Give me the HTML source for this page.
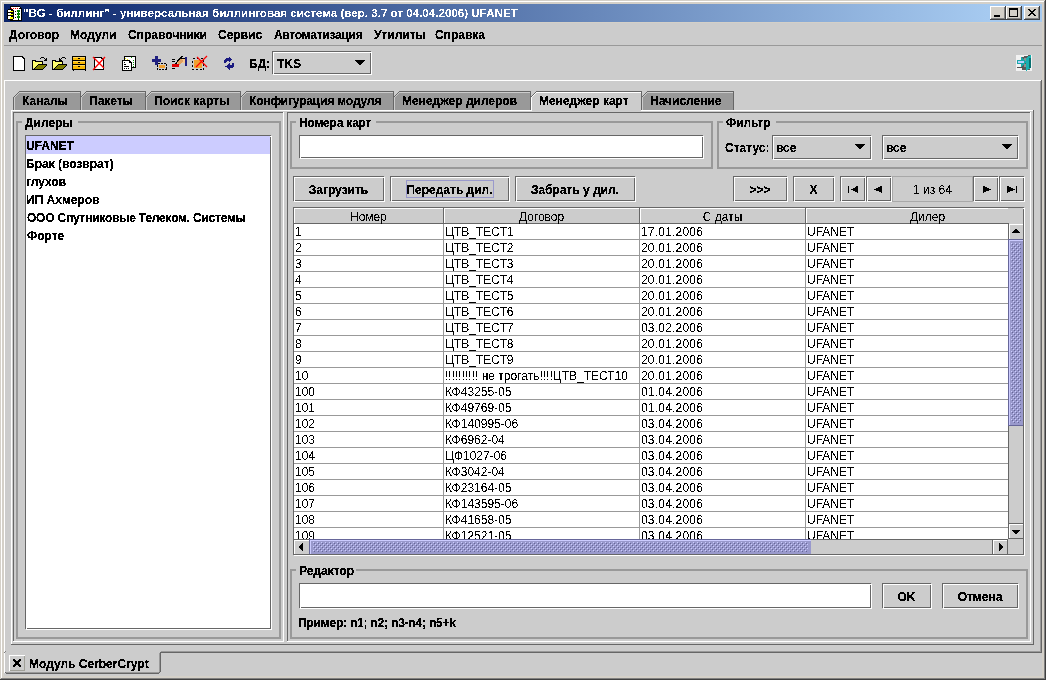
<!DOCTYPE html>
<html><head><meta charset="utf-8"><style>
html,body{margin:0;padding:0;width:1046px;height:680px;overflow:hidden;background:#d4d0c8}
svg{position:absolute;left:0;top:0}
.t{position:absolute;font-family:"Liberation Sans",sans-serif;white-space:pre;line-height:12px;color:#000}
</style></head><body>
<svg width="1046" height="680" viewBox="0 0 1046 680" shape-rendering="crispEdges">
<rect x="0" y="0" width="1046" height="680" fill="#d4d0c8"/><rect x="1" y="1" width="1044" height="1" fill="#ffffff"/><rect x="1" y="1" width="1" height="678" fill="#ffffff"/><rect x="1044" y="1" width="1" height="678" fill="#808080"/><rect x="1" y="678" width="1044" height="1" fill="#808080"/><rect x="1045" y="0" width="1" height="680" fill="#404040"/><rect x="0" y="679" width="1046" height="1" fill="#404040"/><rect x="4" y="23" width="1038" height="653" fill="#cccccc"/><defs><linearGradient id="tg" gradientUnits="userSpaceOnUse" x1="4" x2="988" y1="0" y2="0"><stop offset="0" stop-color="#0a246a"/><stop offset="1" stop-color="#a6caf0"/></linearGradient><pattern id="bumpV" x="1011" y="243" width="4" height="4" patternUnits="userSpaceOnUse"><rect width="4" height="4" fill="#9999cc"/><rect x="0" y="0" width="1" height="1" fill="#ccccff"/><rect x="1" y="1" width="1" height="1" fill="#666699"/><rect x="2" y="2" width="1" height="1" fill="#ccccff"/><rect x="3" y="3" width="1" height="1" fill="#666699"/></pattern><pattern id="bumpH" x="313" y="542" width="4" height="4" patternUnits="userSpaceOnUse"><rect width="4" height="4" fill="#9999cc"/><rect x="0" y="0" width="1" height="1" fill="#ccccff"/><rect x="1" y="1" width="1" height="1" fill="#666699"/><rect x="2" y="2" width="1" height="1" fill="#ccccff"/><rect x="3" y="3" width="1" height="1" fill="#666699"/></pattern></defs><rect x="4" y="4" width="1038" height="18" fill="url(#tg)"/><rect x="990" y="6" width="16" height="14" fill="#d4d0c8"/><rect x="990" y="6" width="16" height="1" fill="#ffffff"/><rect x="990" y="6" width="1" height="14" fill="#ffffff"/><rect x="990" y="19" width="16" height="1" fill="#404040"/><rect x="1005" y="6" width="1" height="14" fill="#404040"/><rect x="991" y="18" width="14" height="1" fill="#808080"/><rect x="1004" y="7" width="1" height="12" fill="#808080"/><rect x="994" y="15" width="6" height="2" fill="#000"/><rect x="1006" y="6" width="16" height="14" fill="#d4d0c8"/><rect x="1006" y="6" width="16" height="1" fill="#ffffff"/><rect x="1006" y="6" width="1" height="14" fill="#ffffff"/><rect x="1006" y="19" width="16" height="1" fill="#404040"/><rect x="1021" y="6" width="1" height="14" fill="#404040"/><rect x="1007" y="18" width="14" height="1" fill="#808080"/><rect x="1020" y="7" width="1" height="12" fill="#808080"/><rect x="1009" y="8" width="9" height="1" fill="#000"/><rect x="1009" y="16" width="9" height="1" fill="#000"/><rect x="1009" y="8" width="1" height="9" fill="#000"/><rect x="1017" y="8" width="1" height="9" fill="#000"/><rect x="1009" y="9" width="9" height="1" fill="#000"/><rect x="1024" y="6" width="16" height="14" fill="#d4d0c8"/><rect x="1024" y="6" width="16" height="1" fill="#ffffff"/><rect x="1024" y="6" width="1" height="14" fill="#ffffff"/><rect x="1024" y="19" width="16" height="1" fill="#404040"/><rect x="1039" y="6" width="1" height="14" fill="#404040"/><rect x="1025" y="18" width="14" height="1" fill="#808080"/><rect x="1038" y="7" width="1" height="12" fill="#808080"/><rect x="1028" y="9" width="2" height="1" fill="#000"/><rect x="1034" y="9" width="2" height="1" fill="#000"/><rect x="1029" y="10" width="2" height="1" fill="#000"/><rect x="1033" y="10" width="2" height="1" fill="#000"/><rect x="1030" y="11" width="2" height="1" fill="#000"/><rect x="1032" y="11" width="2" height="1" fill="#000"/><rect x="1031" y="12" width="2" height="1" fill="#000"/><rect x="1031" y="12" width="2" height="1" fill="#000"/><rect x="1032" y="13" width="2" height="1" fill="#000"/><rect x="1030" y="13" width="2" height="1" fill="#000"/><rect x="1033" y="14" width="2" height="1" fill="#000"/><rect x="1029" y="14" width="2" height="1" fill="#000"/><rect x="1034" y="15" width="2" height="1" fill="#000"/><rect x="1028" y="15" width="2" height="1" fill="#000"/><path d="M10 6 H19 L22 9 V21 H10 Z" fill="#000"/><rect x="11" y="7" width="8" height="13" fill="#fff"/><rect x="19" y="9" width="2" height="11" fill="#fff"/><rect x="19" y="7" width="1" height="1" fill="#fff"/><rect x="11" y="8" width="1" height="1" fill="#ff0000"/><rect x="13" y="8" width="1" height="1" fill="#ff0000"/><rect x="15" y="8" width="1" height="1" fill="#ff0000"/><rect x="17" y="8" width="1" height="1" fill="#ff0000"/><rect x="15" y="11" width="1" height="1" fill="#000"/><rect x="15" y="14" width="1" height="1" fill="#000"/><rect x="15" y="17" width="1" height="1" fill="#000"/><rect x="18" y="10" width="1" height="11" fill="#000"/><rect x="17" y="10" width="3" height="2" fill="#008000"/><rect x="18" y="12" width="1" height="1" fill="#008000"/><rect x="17" y="13" width="3" height="2" fill="#008000"/><rect x="18" y="15" width="1" height="1" fill="#008000"/><rect x="17" y="16" width="3" height="2" fill="#008000"/><rect x="18" y="18" width="1" height="1" fill="#008000"/><path d="M7 10 L8 9 H12 L14 10 V12 L12 14 H8 L7 12 Z" fill="#000"/><rect x="8" y="10" width="3" height="2" fill="#fff"/><rect x="10" y="11" width="3" height="2" fill="#ffff00"/><rect x="8" y="12" width="2" height="1" fill="#fff"/><path d="M7 13 L8 12 H12 L14 13 V15 L12 17 H8 L7 15 Z" fill="#000"/><rect x="8" y="13" width="3" height="2" fill="#fff"/><rect x="10" y="14" width="3" height="2" fill="#ffff00"/><rect x="8" y="15" width="2" height="1" fill="#fff"/><path d="M7 16 L8 15 H12 L14 16 V18 L12 20 H8 L7 18 Z" fill="#000"/><rect x="8" y="16" width="3" height="2" fill="#fff"/><rect x="10" y="17" width="3" height="2" fill="#ffff00"/><rect x="8" y="18" width="2" height="1" fill="#fff"/><rect x="4" y="45" width="1038" height="1" fill="#999999"/><rect x="272" y="51" width="99" height="1" fill="#666666"/><rect x="272" y="73" width="99" height="1" fill="#666666"/><rect x="272" y="51" width="1" height="23" fill="#666666"/><rect x="370" y="51" width="1" height="23" fill="#666666"/><rect x="273" y="52" width="99" height="1" fill="#ffffff"/><rect x="273" y="74" width="99" height="1" fill="#ffffff"/><rect x="273" y="52" width="1" height="23" fill="#ffffff"/><rect x="371" y="52" width="1" height="23" fill="#ffffff"/><rect x="355" y="60" width="10" height="1" fill="#000"/><rect x="356" y="61" width="8" height="1" fill="#000"/><rect x="357" y="62" width="6" height="1" fill="#000"/><rect x="358" y="63" width="4" height="1" fill="#000"/><rect x="359" y="64" width="2" height="1" fill="#000"/><path d="M13.5 56.5 H22 L24.5 59 V70.5 H13.5 Z" fill="#fff" stroke="#000"/><path d="M33 61 H42 V64 H38 L34 68 H33 Z" fill="#ffff70"/><path d="M38 65 H46 L42 69 H34 Z" fill="#808000"/><rect x="32" y="60" width="1" height="10" fill="#000"/><rect x="33" y="60" width="3" height="1" fill="#000"/><rect x="35" y="61" width="8" height="1" fill="#000"/><rect x="42" y="61" width="1" height="3" fill="#000"/><rect x="32" y="69" width="11" height="1" fill="#000"/><rect x="38" y="64" width="9" height="1" fill="#000"/><rect x="46" y="65" width="1" height="1" fill="#000"/><rect x="37" y="65" width="1" height="1" fill="#000"/><rect x="45" y="66" width="1" height="1" fill="#000"/><rect x="36" y="66" width="1" height="1" fill="#000"/><rect x="44" y="67" width="1" height="1" fill="#000"/><rect x="35" y="67" width="1" height="1" fill="#000"/><rect x="43" y="68" width="1" height="1" fill="#000"/><rect x="34" y="68" width="1" height="1" fill="#000"/><rect x="40" y="58" width="1" height="1" fill="#000"/><rect x="41" y="57" width="3" height="1" fill="#000"/><rect x="44" y="58" width="1" height="1" fill="#000"/><rect x="45" y="59" width="1" height="1" fill="#000"/><rect x="44" y="60" width="3" height="1" fill="#000"/><rect x="46" y="58" width="1" height="2" fill="#000"/><path d="M53 61 H62 V64 H58 L54 68 H53 Z" fill="#ffff70"/><path d="M58 65 H66 L62 69 H54 Z" fill="#808000"/><rect x="52" y="60" width="1" height="10" fill="#000"/><rect x="53" y="60" width="3" height="1" fill="#000"/><rect x="55" y="61" width="8" height="1" fill="#000"/><rect x="62" y="61" width="1" height="3" fill="#000"/><rect x="52" y="69" width="11" height="1" fill="#000"/><rect x="58" y="64" width="9" height="1" fill="#000"/><rect x="66" y="65" width="1" height="1" fill="#000"/><rect x="57" y="65" width="1" height="1" fill="#000"/><rect x="65" y="66" width="1" height="1" fill="#000"/><rect x="56" y="66" width="1" height="1" fill="#000"/><rect x="64" y="67" width="1" height="1" fill="#000"/><rect x="55" y="67" width="1" height="1" fill="#000"/><rect x="63" y="68" width="1" height="1" fill="#000"/><rect x="54" y="68" width="1" height="1" fill="#000"/><rect x="65" y="58" width="1" height="1" fill="#000"/><rect x="62" y="57" width="3" height="1" fill="#000"/><rect x="61" y="58" width="1" height="1" fill="#000"/><rect x="60" y="59" width="1" height="1" fill="#000"/><rect x="59" y="60" width="3" height="1" fill="#000"/><rect x="59" y="58" width="1" height="2" fill="#000"/><rect x="72.5" y="56.5" width="13" height="13" fill="#f8b800" stroke="#000"/><rect x="73" y="70" width="1" height="1" fill="#000"/><rect x="85" y="70" width="1" height="1" fill="#000"/><rect x="73" y="57" width="12" height="1" fill="#ffd860"/><rect x="73" y="61" width="12" height="1" fill="#ffd860"/><rect x="73" y="65" width="12" height="1" fill="#ffd860"/><path d="M72.5 60.5 H85.5" stroke="#000"/><path d="M72.5 64.5 H85.5" stroke="#000"/><rect x="78" y="58" width="2" height="1" fill="#000"/><rect x="78" y="62" width="2" height="1" fill="#000"/><rect x="78" y="66" width="2" height="1" fill="#000"/><path d="M94.5 57.5 H101 L103.5 60 V69.5 H94.5 Z" fill="#fff" stroke="#000"/><path d="M93 70 L105 57 M93 57 L104 68" stroke="#f00" stroke-width="1.3" shape-rendering="auto"/><rect x="124" y="56" width="12" height="12" fill="#000"/><rect x="125" y="57" width="10" height="10" fill="#fff"/><rect x="131" y="57" width="1" height="1" fill="#009000"/><rect x="133" y="60" width="1" height="1" fill="#009000"/><rect x="133" y="62" width="1" height="1" fill="#009000"/><rect x="133" y="64" width="1" height="1" fill="#009000"/><rect x="133" y="66" width="1" height="1" fill="#009000"/><rect x="125" y="58" width="1" height="1" fill="#e0e000"/><rect x="127" y="59" width="1" height="1" fill="#e0e000"/><rect x="130" y="62" width="1" height="1" fill="#e0e000"/><path d="M122 60 H129 L132 63 V71 H122 Z" fill="#000"/><rect x="123" y="61" width="6" height="9" fill="#fff"/><rect x="129" y="63" width="2" height="7" fill="#fff"/><rect x="124" y="62" width="1" height="1" fill="#000"/><rect x="124" y="64" width="2" height="1" fill="#000"/><rect x="124" y="66" width="5" height="1" fill="#000"/><rect x="124" y="68" width="1" height="1" fill="#000"/><rect x="126" y="68" width="1" height="1" fill="#000"/><rect x="128" y="68" width="1" height="1" fill="#000"/><rect x="152" y="59" width="9" height="3" fill="#202080"/><rect x="155" y="56" width="3" height="9" fill="#202080"/><rect x="159" y="65" width="6" height="3" fill="#f0a030"/><rect x="157.5" y="63.5" width="9" height="6" fill="none" stroke="#000" stroke-dasharray="2 1"/><rect x="180" y="58" width="6" height="5" fill="#f8c890"/><rect x="180" y="58" width="6" height="1" fill="#000"/><rect x="185" y="57" width="2" height="9" fill="#202080"/><path d="M174 66 L182 56" stroke="#000" stroke-width="1.6"/><path d="M177 62 L181 58 L183 61 L179 65 Z" fill="#e0a060"/><rect x="172" y="64" width="7" height="3" fill="#e00000"/><rect x="172" y="59" width="3" height="1" fill="#000"/><rect x="172" y="61" width="3" height="1" fill="#000"/><rect x="172" y="68" width="3" height="1" fill="#000"/><rect x="194" y="60" width="8" height="8" fill="#f0a030"/><rect x="192.5" y="58.5" width="11" height="11" fill="none" stroke="#000" stroke-dasharray="2 2"/><path d="M196 67 L207 56 M197 57 L207 67" stroke="#f00" stroke-width="1.2" shape-rendering="auto"/><path d="M224 63 V60 L226 58 H228.5 V56 L232.5 59.5 L228.5 63 V61 H227 L226 62 V63 Z" fill="#1a1a80"/><path d="M234 63 V66 L232 68 H229.5 V70 L225.5 66.5 L229.5 63 V65 H231 L232 64 V63 Z" fill="#1a1a80"/><rect x="1016" y="55" width="16" height="16" fill="#f2f2f2"/><path d="M1022 57 L1030 55 V70 H1022 Z" fill="#5a5a5a"/><rect x="1024" y="58" width="3" height="4" fill="#909090"/><rect x="1024" y="64" width="3" height="3" fill="#909090"/><path d="M1026 58 L1031 55 V68 L1026 71 Z" fill="#18b0b0"/><rect x="1029" y="58" width="2" height="10" fill="#087070"/><path d="M1021 57 L1026 62 L1021 67 Z" fill="#18a8a8"/><rect x="1017" y="60" width="5" height="4" fill="#18a8a8"/><rect x="1018" y="61" width="6" height="2" fill="#b8d0ff"/><rect x="1017" y="67" width="6" height="1" fill="#505050"/><rect x="4" y="80" width="1038" height="1" fill="#ffffff"/><rect x="4" y="80" width="1" height="593" fill="#ffffff"/><rect x="1041" y="80" width="1" height="573" fill="#666666"/><rect x="1040" y="81" width="1" height="571" fill="#999999"/><rect x="161" y="651" width="880" height="1" fill="#999999"/><path d="M13 110 V97 L19 91 H80 V110 Z" fill="#999999"/><path d="M80 110 V97 L86 91 H145 V110 Z" fill="#999999"/><path d="M145 110 V97 L151 91 H240 V110 Z" fill="#999999"/><path d="M240 110 V97 L246 91 H393 V110 Z" fill="#999999"/><path d="M393 110 V97 L399 91 H530 V110 Z" fill="#999999"/><path d="M530 110 V97 L536 91 H641 V110 Z" fill="#cccccc"/><path d="M641 110 V97 L647 91 H733 V110 Z" fill="#999999"/><rect x="13" y="97" width="1" height="1" fill="#666666"/><rect x="14" y="96" width="1" height="1" fill="#666666"/><rect x="15" y="95" width="1" height="1" fill="#666666"/><rect x="16" y="94" width="1" height="1" fill="#666666"/><rect x="17" y="93" width="1" height="1" fill="#666666"/><rect x="18" y="92" width="1" height="1" fill="#666666"/><rect x="19" y="91" width="1" height="1" fill="#666666"/><rect x="19" y="91" width="62" height="1" fill="#666666"/><rect x="80" y="91" width="1" height="19" fill="#666666"/><rect x="13" y="97" width="1" height="13" fill="#666666"/><rect x="14" y="97" width="1" height="1" fill="#cccccc"/><rect x="15" y="96" width="1" height="1" fill="#cccccc"/><rect x="16" y="95" width="1" height="1" fill="#cccccc"/><rect x="17" y="94" width="1" height="1" fill="#cccccc"/><rect x="18" y="93" width="1" height="1" fill="#cccccc"/><rect x="19" y="92" width="1" height="1" fill="#cccccc"/><rect x="20" y="92" width="60" height="1" fill="#cccccc"/><rect x="14" y="97" width="1" height="13" fill="#cccccc"/><rect x="80" y="97" width="1" height="1" fill="#666666"/><rect x="81" y="96" width="1" height="1" fill="#666666"/><rect x="82" y="95" width="1" height="1" fill="#666666"/><rect x="83" y="94" width="1" height="1" fill="#666666"/><rect x="84" y="93" width="1" height="1" fill="#666666"/><rect x="85" y="92" width="1" height="1" fill="#666666"/><rect x="86" y="91" width="1" height="1" fill="#666666"/><rect x="86" y="91" width="60" height="1" fill="#666666"/><rect x="145" y="91" width="1" height="19" fill="#666666"/><rect x="81" y="97" width="1" height="1" fill="#cccccc"/><rect x="82" y="96" width="1" height="1" fill="#cccccc"/><rect x="83" y="95" width="1" height="1" fill="#cccccc"/><rect x="84" y="94" width="1" height="1" fill="#cccccc"/><rect x="85" y="93" width="1" height="1" fill="#cccccc"/><rect x="86" y="92" width="1" height="1" fill="#cccccc"/><rect x="87" y="92" width="58" height="1" fill="#cccccc"/><rect x="81" y="97" width="1" height="13" fill="#cccccc"/><rect x="145" y="97" width="1" height="1" fill="#666666"/><rect x="146" y="96" width="1" height="1" fill="#666666"/><rect x="147" y="95" width="1" height="1" fill="#666666"/><rect x="148" y="94" width="1" height="1" fill="#666666"/><rect x="149" y="93" width="1" height="1" fill="#666666"/><rect x="150" y="92" width="1" height="1" fill="#666666"/><rect x="151" y="91" width="1" height="1" fill="#666666"/><rect x="151" y="91" width="90" height="1" fill="#666666"/><rect x="240" y="91" width="1" height="19" fill="#666666"/><rect x="146" y="97" width="1" height="1" fill="#cccccc"/><rect x="147" y="96" width="1" height="1" fill="#cccccc"/><rect x="148" y="95" width="1" height="1" fill="#cccccc"/><rect x="149" y="94" width="1" height="1" fill="#cccccc"/><rect x="150" y="93" width="1" height="1" fill="#cccccc"/><rect x="151" y="92" width="1" height="1" fill="#cccccc"/><rect x="152" y="92" width="88" height="1" fill="#cccccc"/><rect x="146" y="97" width="1" height="13" fill="#cccccc"/><rect x="240" y="97" width="1" height="1" fill="#666666"/><rect x="241" y="96" width="1" height="1" fill="#666666"/><rect x="242" y="95" width="1" height="1" fill="#666666"/><rect x="243" y="94" width="1" height="1" fill="#666666"/><rect x="244" y="93" width="1" height="1" fill="#666666"/><rect x="245" y="92" width="1" height="1" fill="#666666"/><rect x="246" y="91" width="1" height="1" fill="#666666"/><rect x="246" y="91" width="148" height="1" fill="#666666"/><rect x="393" y="91" width="1" height="19" fill="#666666"/><rect x="241" y="97" width="1" height="1" fill="#cccccc"/><rect x="242" y="96" width="1" height="1" fill="#cccccc"/><rect x="243" y="95" width="1" height="1" fill="#cccccc"/><rect x="244" y="94" width="1" height="1" fill="#cccccc"/><rect x="245" y="93" width="1" height="1" fill="#cccccc"/><rect x="246" y="92" width="1" height="1" fill="#cccccc"/><rect x="247" y="92" width="146" height="1" fill="#cccccc"/><rect x="241" y="97" width="1" height="13" fill="#cccccc"/><rect x="393" y="97" width="1" height="1" fill="#666666"/><rect x="394" y="96" width="1" height="1" fill="#666666"/><rect x="395" y="95" width="1" height="1" fill="#666666"/><rect x="396" y="94" width="1" height="1" fill="#666666"/><rect x="397" y="93" width="1" height="1" fill="#666666"/><rect x="398" y="92" width="1" height="1" fill="#666666"/><rect x="399" y="91" width="1" height="1" fill="#666666"/><rect x="399" y="91" width="132" height="1" fill="#666666"/><rect x="530" y="91" width="1" height="19" fill="#666666"/><rect x="394" y="97" width="1" height="1" fill="#cccccc"/><rect x="395" y="96" width="1" height="1" fill="#cccccc"/><rect x="396" y="95" width="1" height="1" fill="#cccccc"/><rect x="397" y="94" width="1" height="1" fill="#cccccc"/><rect x="398" y="93" width="1" height="1" fill="#cccccc"/><rect x="399" y="92" width="1" height="1" fill="#cccccc"/><rect x="400" y="92" width="130" height="1" fill="#cccccc"/><rect x="394" y="97" width="1" height="13" fill="#cccccc"/><rect x="530" y="97" width="1" height="1" fill="#666666"/><rect x="531" y="96" width="1" height="1" fill="#666666"/><rect x="532" y="95" width="1" height="1" fill="#666666"/><rect x="533" y="94" width="1" height="1" fill="#666666"/><rect x="534" y="93" width="1" height="1" fill="#666666"/><rect x="535" y="92" width="1" height="1" fill="#666666"/><rect x="536" y="91" width="1" height="1" fill="#666666"/><rect x="536" y="91" width="106" height="1" fill="#666666"/><rect x="641" y="91" width="1" height="20" fill="#666666"/><rect x="531" y="97" width="1" height="1" fill="#ffffff"/><rect x="532" y="96" width="1" height="1" fill="#ffffff"/><rect x="533" y="95" width="1" height="1" fill="#ffffff"/><rect x="534" y="94" width="1" height="1" fill="#ffffff"/><rect x="535" y="93" width="1" height="1" fill="#ffffff"/><rect x="536" y="92" width="1" height="1" fill="#ffffff"/><rect x="537" y="92" width="104" height="1" fill="#ffffff"/><rect x="531" y="97" width="1" height="14" fill="#ffffff"/><rect x="641" y="97" width="1" height="1" fill="#666666"/><rect x="642" y="96" width="1" height="1" fill="#666666"/><rect x="643" y="95" width="1" height="1" fill="#666666"/><rect x="644" y="94" width="1" height="1" fill="#666666"/><rect x="645" y="93" width="1" height="1" fill="#666666"/><rect x="646" y="92" width="1" height="1" fill="#666666"/><rect x="647" y="91" width="1" height="1" fill="#666666"/><rect x="647" y="91" width="87" height="1" fill="#666666"/><rect x="733" y="91" width="1" height="19" fill="#666666"/><rect x="642" y="97" width="1" height="1" fill="#cccccc"/><rect x="643" y="96" width="1" height="1" fill="#cccccc"/><rect x="644" y="95" width="1" height="1" fill="#cccccc"/><rect x="645" y="94" width="1" height="1" fill="#cccccc"/><rect x="646" y="93" width="1" height="1" fill="#cccccc"/><rect x="647" y="92" width="1" height="1" fill="#cccccc"/><rect x="648" y="92" width="85" height="1" fill="#cccccc"/><rect x="642" y="97" width="1" height="13" fill="#cccccc"/><rect x="11" y="110" width="520" height="1" fill="#ffffff"/><rect x="641" y="110" width="392" height="1" fill="#ffffff"/><rect x="11" y="110" width="1" height="535" fill="#ffffff"/><rect x="1033" y="110" width="1" height="535" fill="#666666"/><rect x="11" y="644" width="1023" height="1" fill="#666666"/><rect x="13" y="112" width="271" height="1" fill="#666666"/><rect x="13" y="112" width="1" height="530" fill="#666666"/><rect x="283" y="112" width="1" height="530" fill="#ffffff"/><rect x="13" y="641" width="271" height="1" fill="#ffffff"/><rect x="16" y="121" width="6" height="2" fill="#999999"/><rect x="78" y="121" width="203" height="2" fill="#999999"/><rect x="16" y="637" width="265" height="2" fill="#999999"/><rect x="16" y="121" width="2" height="518" fill="#999999"/><rect x="279" y="121" width="2" height="518" fill="#999999"/><rect x="26" y="136" width="245" height="493" fill="#fff"/><rect x="25" y="135" width="246" height="1" fill="#666666"/><rect x="25" y="628" width="246" height="1" fill="#666666"/><rect x="25" y="135" width="1" height="494" fill="#666666"/><rect x="270" y="135" width="1" height="494" fill="#666666"/><rect x="26" y="136" width="246" height="1" fill="#ffffff"/><rect x="26" y="629" width="246" height="1" fill="#ffffff"/><rect x="26" y="136" width="1" height="494" fill="#ffffff"/><rect x="271" y="136" width="1" height="494" fill="#ffffff"/><rect x="26" y="136" width="244" height="18" fill="#ccccff"/><rect x="287" y="112" width="744" height="1" fill="#666666"/><rect x="287" y="112" width="1" height="530" fill="#666666"/><rect x="1030" y="112" width="1" height="530" fill="#ffffff"/><rect x="287" y="641" width="744" height="1" fill="#ffffff"/><rect x="290" y="121" width="6" height="2" fill="#999999"/><rect x="376" y="121" width="337" height="2" fill="#999999"/><rect x="290" y="167" width="423" height="2" fill="#999999"/><rect x="290" y="121" width="2" height="48" fill="#999999"/><rect x="711" y="121" width="2" height="48" fill="#999999"/><rect x="300" y="136" width="403" height="22" fill="#fff"/><rect x="299" y="135" width="404" height="1" fill="#666666"/><rect x="299" y="157" width="404" height="1" fill="#666666"/><rect x="299" y="135" width="1" height="23" fill="#666666"/><rect x="702" y="135" width="1" height="23" fill="#666666"/><rect x="300" y="136" width="404" height="1" fill="#ffffff"/><rect x="300" y="158" width="404" height="1" fill="#ffffff"/><rect x="300" y="136" width="1" height="23" fill="#ffffff"/><rect x="703" y="136" width="1" height="23" fill="#ffffff"/><rect x="717" y="121" width="6" height="2" fill="#999999"/><rect x="776" y="121" width="252" height="2" fill="#999999"/><rect x="717" y="167" width="311" height="2" fill="#999999"/><rect x="717" y="121" width="2" height="48" fill="#999999"/><rect x="1026" y="121" width="2" height="48" fill="#999999"/><rect x="772" y="135" width="99" height="1" fill="#666666"/><rect x="772" y="158" width="99" height="1" fill="#666666"/><rect x="772" y="135" width="1" height="24" fill="#666666"/><rect x="870" y="135" width="1" height="24" fill="#666666"/><rect x="773" y="136" width="99" height="1" fill="#ffffff"/><rect x="773" y="159" width="99" height="1" fill="#ffffff"/><rect x="773" y="136" width="1" height="24" fill="#ffffff"/><rect x="871" y="136" width="1" height="24" fill="#ffffff"/><rect x="855" y="144" width="10" height="1" fill="#000"/><rect x="856" y="145" width="8" height="1" fill="#000"/><rect x="857" y="146" width="6" height="1" fill="#000"/><rect x="858" y="147" width="4" height="1" fill="#000"/><rect x="859" y="148" width="2" height="1" fill="#000"/><rect x="882" y="135" width="136" height="1" fill="#666666"/><rect x="882" y="158" width="136" height="1" fill="#666666"/><rect x="882" y="135" width="1" height="24" fill="#666666"/><rect x="1017" y="135" width="1" height="24" fill="#666666"/><rect x="883" y="136" width="136" height="1" fill="#ffffff"/><rect x="883" y="159" width="136" height="1" fill="#ffffff"/><rect x="883" y="136" width="1" height="24" fill="#ffffff"/><rect x="1018" y="136" width="1" height="24" fill="#ffffff"/><rect x="1002" y="144" width="10" height="1" fill="#000"/><rect x="1003" y="145" width="8" height="1" fill="#000"/><rect x="1004" y="146" width="6" height="1" fill="#000"/><rect x="1005" y="147" width="4" height="1" fill="#000"/><rect x="1006" y="148" width="2" height="1" fill="#000"/><rect x="293" y="176" width="91" height="1" fill="#666666"/><rect x="293" y="200" width="91" height="1" fill="#666666"/><rect x="293" y="176" width="1" height="25" fill="#666666"/><rect x="383" y="176" width="1" height="25" fill="#666666"/><rect x="294" y="177" width="91" height="1" fill="#ffffff"/><rect x="294" y="201" width="91" height="1" fill="#ffffff"/><rect x="294" y="177" width="1" height="25" fill="#ffffff"/><rect x="384" y="177" width="1" height="25" fill="#ffffff"/><rect x="390" y="176" width="119" height="1" fill="#666666"/><rect x="390" y="200" width="119" height="1" fill="#666666"/><rect x="390" y="176" width="1" height="25" fill="#666666"/><rect x="508" y="176" width="1" height="25" fill="#666666"/><rect x="391" y="177" width="119" height="1" fill="#ffffff"/><rect x="391" y="201" width="119" height="1" fill="#ffffff"/><rect x="391" y="177" width="1" height="25" fill="#ffffff"/><rect x="509" y="177" width="1" height="25" fill="#ffffff"/><rect x="406" y="180" width="88" height="1" fill="#9999cc"/><rect x="406" y="197" width="88" height="1" fill="#9999cc"/><rect x="406" y="180" width="1" height="18" fill="#9999cc"/><rect x="493" y="180" width="1" height="18" fill="#9999cc"/><rect x="515" y="176" width="120" height="1" fill="#666666"/><rect x="515" y="200" width="120" height="1" fill="#666666"/><rect x="515" y="176" width="1" height="25" fill="#666666"/><rect x="634" y="176" width="1" height="25" fill="#666666"/><rect x="516" y="177" width="120" height="1" fill="#ffffff"/><rect x="516" y="201" width="120" height="1" fill="#ffffff"/><rect x="516" y="177" width="1" height="25" fill="#ffffff"/><rect x="635" y="177" width="1" height="25" fill="#ffffff"/><rect x="733" y="176" width="54" height="1" fill="#666666"/><rect x="733" y="200" width="54" height="1" fill="#666666"/><rect x="733" y="176" width="1" height="25" fill="#666666"/><rect x="786" y="176" width="1" height="25" fill="#666666"/><rect x="734" y="177" width="54" height="1" fill="#ffffff"/><rect x="734" y="201" width="54" height="1" fill="#ffffff"/><rect x="734" y="177" width="1" height="25" fill="#ffffff"/><rect x="787" y="177" width="1" height="25" fill="#ffffff"/><rect x="793" y="176" width="41" height="1" fill="#666666"/><rect x="793" y="200" width="41" height="1" fill="#666666"/><rect x="793" y="176" width="1" height="25" fill="#666666"/><rect x="833" y="176" width="1" height="25" fill="#666666"/><rect x="794" y="177" width="41" height="1" fill="#ffffff"/><rect x="794" y="201" width="41" height="1" fill="#ffffff"/><rect x="794" y="177" width="1" height="25" fill="#ffffff"/><rect x="834" y="177" width="1" height="25" fill="#ffffff"/><rect x="840" y="176" width="25" height="1" fill="#666666"/><rect x="840" y="200" width="25" height="1" fill="#666666"/><rect x="840" y="176" width="1" height="25" fill="#666666"/><rect x="864" y="176" width="1" height="25" fill="#666666"/><rect x="841" y="177" width="25" height="1" fill="#ffffff"/><rect x="841" y="201" width="25" height="1" fill="#ffffff"/><rect x="841" y="177" width="1" height="25" fill="#ffffff"/><rect x="865" y="177" width="1" height="25" fill="#ffffff"/><rect x="848" y="186" width="1" height="7" fill="#000"/><path d="M851 189.5 L858 185.5 V193 Z" fill="#000"/><rect x="866" y="176" width="25" height="1" fill="#666666"/><rect x="866" y="200" width="25" height="1" fill="#666666"/><rect x="866" y="176" width="1" height="25" fill="#666666"/><rect x="890" y="176" width="1" height="25" fill="#666666"/><rect x="867" y="177" width="25" height="1" fill="#ffffff"/><rect x="867" y="201" width="25" height="1" fill="#ffffff"/><rect x="867" y="177" width="1" height="25" fill="#ffffff"/><rect x="891" y="177" width="1" height="25" fill="#ffffff"/><path d="M874 189.5 L882 185.5 V193 Z" fill="#000"/><rect x="892" y="176" width="81" height="1" fill="#a8a8a8"/><rect x="892" y="201" width="81" height="1" fill="#a8a8a8"/><rect x="892" y="176" width="1" height="26" fill="#a8a8a8"/><rect x="972" y="176" width="1" height="26" fill="#a8a8a8"/><rect x="973" y="176" width="25" height="1" fill="#666666"/><rect x="973" y="200" width="25" height="1" fill="#666666"/><rect x="973" y="176" width="1" height="25" fill="#666666"/><rect x="997" y="176" width="1" height="25" fill="#666666"/><rect x="974" y="177" width="25" height="1" fill="#ffffff"/><rect x="974" y="201" width="25" height="1" fill="#ffffff"/><rect x="974" y="177" width="1" height="25" fill="#ffffff"/><rect x="998" y="177" width="1" height="25" fill="#ffffff"/><path d="M991 189.5 L983 185.5 V193 Z" fill="#000"/><rect x="999" y="176" width="25" height="1" fill="#666666"/><rect x="999" y="200" width="25" height="1" fill="#666666"/><rect x="999" y="176" width="1" height="25" fill="#666666"/><rect x="1023" y="176" width="1" height="25" fill="#666666"/><rect x="1000" y="177" width="25" height="1" fill="#ffffff"/><rect x="1000" y="201" width="25" height="1" fill="#ffffff"/><rect x="1000" y="177" width="1" height="25" fill="#ffffff"/><rect x="1024" y="177" width="1" height="25" fill="#ffffff"/><path d="M1015 189.5 L1007 185.5 V193 Z" fill="#000"/><rect x="1016" y="186" width="1" height="7" fill="#000"/><rect x="293" y="207" width="731" height="1" fill="#666666"/><rect x="293" y="554" width="731" height="1" fill="#666666"/><rect x="293" y="207" width="1" height="348" fill="#666666"/><rect x="1023" y="207" width="1" height="348" fill="#666666"/><rect x="294" y="208" width="731" height="1" fill="#ffffff"/><rect x="294" y="555" width="731" height="1" fill="#ffffff"/><rect x="294" y="208" width="1" height="348" fill="#ffffff"/><rect x="1024" y="208" width="1" height="348" fill="#ffffff"/><rect x="294" y="208" width="714" height="15" fill="#cccccc"/><rect x="294" y="208" width="150" height="1" fill="#ffffff"/><rect x="294" y="208" width="1" height="15" fill="#ffffff"/><rect x="443" y="208" width="1" height="16" fill="#666666"/><rect x="444" y="208" width="196" height="1" fill="#ffffff"/><rect x="444" y="208" width="1" height="15" fill="#ffffff"/><rect x="639" y="208" width="1" height="16" fill="#666666"/><rect x="640" y="208" width="166" height="1" fill="#ffffff"/><rect x="640" y="208" width="1" height="15" fill="#ffffff"/><rect x="805" y="208" width="1" height="16" fill="#666666"/><rect x="806" y="208" width="202" height="1" fill="#ffffff"/><rect x="806" y="208" width="1" height="15" fill="#ffffff"/><rect x="294" y="223" width="714" height="1" fill="#666666"/><rect x="1008" y="208" width="15" height="15" fill="#cccccc"/><rect x="1008" y="223" width="1" height="16" fill="#666666"/><rect x="294" y="224" width="714" height="315" fill="#fff"/><rect x="294" y="239" width="714" height="1" fill="#999999"/><rect x="294" y="255" width="714" height="1" fill="#999999"/><rect x="294" y="271" width="714" height="1" fill="#999999"/><rect x="294" y="287" width="714" height="1" fill="#999999"/><rect x="294" y="303" width="714" height="1" fill="#999999"/><rect x="294" y="319" width="714" height="1" fill="#999999"/><rect x="294" y="335" width="714" height="1" fill="#999999"/><rect x="294" y="351" width="714" height="1" fill="#999999"/><rect x="294" y="367" width="714" height="1" fill="#999999"/><rect x="294" y="383" width="714" height="1" fill="#999999"/><rect x="294" y="399" width="714" height="1" fill="#999999"/><rect x="294" y="415" width="714" height="1" fill="#999999"/><rect x="294" y="431" width="714" height="1" fill="#999999"/><rect x="294" y="447" width="714" height="1" fill="#999999"/><rect x="294" y="463" width="714" height="1" fill="#999999"/><rect x="294" y="479" width="714" height="1" fill="#999999"/><rect x="294" y="495" width="714" height="1" fill="#999999"/><rect x="294" y="511" width="714" height="1" fill="#999999"/><rect x="294" y="527" width="714" height="1" fill="#999999"/><rect x="443" y="224" width="1" height="315" fill="#999999"/><rect x="639" y="224" width="1" height="315" fill="#999999"/><rect x="805" y="224" width="1" height="315" fill="#999999"/><rect x="1008" y="224" width="15" height="315" fill="#cccccc"/><rect x="1008" y="224" width="1" height="315" fill="#666666"/><rect x="1009" y="224" width="14" height="1" fill="#ffffff"/><rect x="1009" y="224" width="1" height="15" fill="#ffffff"/><rect x="1015" y="229" width="2" height="1" fill="#000"/><rect x="1014" y="230" width="4" height="1" fill="#000"/><rect x="1013" y="231" width="6" height="1" fill="#000"/><rect x="1012" y="232" width="8" height="1" fill="#000"/><rect x="1008" y="239" width="15" height="187" fill="#666699"/><rect x="1009" y="240" width="14" height="185" fill="#ccccff"/><rect x="1010" y="241" width="13" height="184" fill="#9999cc"/><rect x="1011" y="243" width="10" height="180" fill="url(#bumpV)"/><rect x="1009" y="523" width="14" height="1" fill="#666666"/><rect x="1009" y="524" width="14" height="1" fill="#ffffff"/><rect x="1009" y="524" width="1" height="14" fill="#ffffff"/><rect x="1009" y="538" width="14" height="1" fill="#666666"/><rect x="1012" y="530" width="8" height="1" fill="#000"/><rect x="1013" y="531" width="6" height="1" fill="#000"/><rect x="1014" y="532" width="4" height="1" fill="#000"/><rect x="1015" y="533" width="2" height="1" fill="#000"/><rect x="294" y="539" width="714" height="16" fill="#cccccc"/><rect x="294" y="539" width="714" height="1" fill="#666666"/><rect x="294" y="554" width="714" height="1" fill="#666666"/><rect x="294" y="540" width="1" height="14" fill="#ffffff"/><rect x="294" y="540" width="15" height="1" fill="#ffffff"/><rect x="299" y="546" width="1" height="2" fill="#000"/><rect x="300" y="545" width="1" height="4" fill="#000"/><rect x="301" y="544" width="1" height="6" fill="#000"/><rect x="302" y="543" width="1" height="8" fill="#000"/><rect x="309" y="539" width="502" height="15" fill="#666699"/><rect x="310" y="540" width="501" height="14" fill="#ccccff"/><rect x="311" y="541" width="500" height="13" fill="#9999cc"/><rect x="313" y="542" width="495" height="10" fill="url(#bumpH)"/><rect x="992" y="540" width="1" height="14" fill="#666666"/><rect x="993" y="540" width="1" height="14" fill="#ffffff"/><rect x="993" y="540" width="15" height="1" fill="#ffffff"/><rect x="1002" y="546" width="1" height="2" fill="#000"/><rect x="1001" y="545" width="1" height="4" fill="#000"/><rect x="1000" y="544" width="1" height="6" fill="#000"/><rect x="999" y="543" width="1" height="8" fill="#000"/><rect x="1007" y="540" width="1" height="14" fill="#666666"/><rect x="1008" y="539" width="15" height="15" fill="#cccccc"/><rect x="290" y="569" width="6" height="2" fill="#999999"/><rect x="356" y="569" width="672" height="2" fill="#999999"/><rect x="290" y="637" width="738" height="2" fill="#999999"/><rect x="290" y="569" width="2" height="70" fill="#999999"/><rect x="1026" y="569" width="2" height="70" fill="#999999"/><rect x="300" y="584" width="571" height="24" fill="#fff"/><rect x="299" y="583" width="572" height="1" fill="#666666"/><rect x="299" y="607" width="572" height="1" fill="#666666"/><rect x="299" y="583" width="1" height="25" fill="#666666"/><rect x="870" y="583" width="1" height="25" fill="#666666"/><rect x="300" y="584" width="572" height="1" fill="#ffffff"/><rect x="300" y="608" width="572" height="1" fill="#ffffff"/><rect x="300" y="584" width="1" height="25" fill="#ffffff"/><rect x="871" y="584" width="1" height="25" fill="#ffffff"/><rect x="882" y="583" width="49" height="1" fill="#666666"/><rect x="882" y="607" width="49" height="1" fill="#666666"/><rect x="882" y="583" width="1" height="25" fill="#666666"/><rect x="930" y="583" width="1" height="25" fill="#666666"/><rect x="883" y="584" width="49" height="1" fill="#ffffff"/><rect x="883" y="608" width="49" height="1" fill="#ffffff"/><rect x="883" y="584" width="1" height="25" fill="#ffffff"/><rect x="931" y="584" width="1" height="25" fill="#ffffff"/><rect x="942" y="583" width="76" height="1" fill="#666666"/><rect x="942" y="607" width="76" height="1" fill="#666666"/><rect x="942" y="583" width="1" height="25" fill="#666666"/><rect x="1017" y="583" width="1" height="25" fill="#666666"/><rect x="943" y="584" width="76" height="1" fill="#ffffff"/><rect x="943" y="608" width="76" height="1" fill="#ffffff"/><rect x="943" y="584" width="1" height="25" fill="#ffffff"/><rect x="1018" y="584" width="1" height="25" fill="#ffffff"/><rect x="161" y="652" width="881" height="1" fill="#666666"/><rect x="5" y="651" width="1" height="1" fill="#808080"/><rect x="4" y="652" width="1" height="1" fill="#808080"/><rect x="160" y="652" width="1" height="20" fill="#666666"/><rect x="159" y="653" width="1" height="19" fill="#999999"/><rect x="159" y="672" width="1" height="1" fill="#666666"/><rect x="6" y="673" width="153" height="1" fill="#666666"/><rect x="6" y="672" width="153" height="1" fill="#999999"/><rect x="5" y="672" width="1" height="1" fill="#666666"/><rect x="9" y="655" width="16" height="16" fill="#cccccc"/><rect x="9" y="655" width="16" height="1" fill="#ffffff"/><rect x="9" y="655" width="1" height="16" fill="#ffffff"/><rect x="10" y="670" width="15" height="1" fill="#a0a098"/><rect x="24" y="656" width="1" height="15" fill="#a0a098"/><rect x="13" y="659" width="2" height="2" fill="#000"/><rect x="19" y="659" width="2" height="2" fill="#000"/><rect x="14" y="660" width="2" height="2" fill="#000"/><rect x="18" y="660" width="2" height="2" fill="#000"/><rect x="15" y="661" width="2" height="2" fill="#000"/><rect x="17" y="661" width="2" height="2" fill="#000"/><rect x="16" y="662" width="2" height="2" fill="#000"/><rect x="16" y="662" width="2" height="2" fill="#000"/><rect x="17" y="663" width="2" height="2" fill="#000"/><rect x="15" y="663" width="2" height="2" fill="#000"/><rect x="18" y="664" width="2" height="2" fill="#000"/><rect x="14" y="664" width="2" height="2" fill="#000"/><rect x="19" y="665" width="2" height="2" fill="#000"/><rect x="13" y="665" width="2" height="2" fill="#000"/>
</svg>
<svg width="0" height="0" style="position:absolute"><filter id="th" x="0" y="0" width="100%" height="100%"><feComponentTransfer><feFuncA type="discrete" tableValues="0 1"/></feComponentTransfer></filter></svg>
<div style="position:absolute;left:0;top:0;width:1046px;height:680px;filter:url(#th)">
<div class="t" style="left:23px;top:7px;font-size:11.6px;font-weight:bold;color:#fff;">"BG - биллинг" - универсальная биллинговая система (вер. 3.7 от 04.04.2006) UFANET</div><div class="t" style="left:9px;top:29px;font-size:12px;font-weight:bold;color:#000;-webkit-text-stroke:0.2px currentColor;">Договор</div><div class="t" style="left:70px;top:29px;font-size:12px;font-weight:bold;color:#000;-webkit-text-stroke:0.2px currentColor;">Модули</div><div class="t" style="left:128px;top:29px;font-size:12px;font-weight:bold;color:#000;-webkit-text-stroke:0.2px currentColor;">Справочники</div><div class="t" style="left:218px;top:29px;font-size:12px;font-weight:bold;color:#000;-webkit-text-stroke:0.2px currentColor;">Сервис</div><div class="t" style="left:274px;top:29px;font-size:12px;font-weight:bold;color:#000;letter-spacing:-0.25px;-webkit-text-stroke:0.2px currentColor;">Автоматизация</div><div class="t" style="left:374px;top:29px;font-size:12px;font-weight:bold;color:#000;-webkit-text-stroke:0.2px currentColor;">Утилиты</div><div class="t" style="left:435px;top:29px;font-size:12px;font-weight:bold;color:#000;-webkit-text-stroke:0.2px currentColor;">Справка</div><div class="t" style="left:249px;top:58px;font-size:12px;font-weight:bold;color:#000;-webkit-text-stroke:0.2px currentColor;">БД:</div><div class="t" style="left:277px;top:58px;font-size:12px;font-weight:bold;color:#000;-webkit-text-stroke:0.2px currentColor;">TKS</div><div class="t" style="left:22px;top:95px;font-size:12px;font-weight:bold;color:#000;-webkit-text-stroke:0.2px currentColor;">Каналы</div><div class="t" style="left:89px;top:95px;font-size:12px;font-weight:bold;color:#000;-webkit-text-stroke:0.2px currentColor;">Пакеты</div><div class="t" style="left:154px;top:95px;font-size:12px;font-weight:bold;color:#000;-webkit-text-stroke:0.2px currentColor;">Поиск карты</div><div class="t" style="left:249px;top:95px;font-size:12px;font-weight:bold;color:#000;letter-spacing:-0.16px;-webkit-text-stroke:0.2px currentColor;">Конфигурация модуля</div><div class="t" style="left:402px;top:95px;font-size:12px;font-weight:bold;color:#000;-webkit-text-stroke:0.2px currentColor;">Менеджер дилеров</div><div class="t" style="left:539px;top:95px;font-size:12px;font-weight:bold;color:#000;-webkit-text-stroke:0.2px currentColor;">Менеджер карт</div><div class="t" style="left:650px;top:95px;font-size:12px;font-weight:bold;color:#000;-webkit-text-stroke:0.2px currentColor;">Начисление</div><div class="t" style="left:25px;top:117px;font-size:12px;font-weight:bold;color:#000;-webkit-text-stroke:0.2px currentColor;">Дилеры</div><div class="t" style="left:26px;top:140px;font-size:12px;font-weight:bold;color:#000;-webkit-text-stroke:0.2px currentColor;">UFANET</div><div class="t" style="left:26px;top:158px;font-size:12px;font-weight:bold;color:#000;-webkit-text-stroke:0.2px currentColor;">Брак (возврат)</div><div class="t" style="left:26px;top:176px;font-size:12px;font-weight:bold;color:#000;-webkit-text-stroke:0.2px currentColor;">глухов</div><div class="t" style="left:26px;top:194px;font-size:12px;font-weight:bold;color:#000;-webkit-text-stroke:0.2px currentColor;">ИП Ахмеров</div><div class="t" style="left:27px;top:212px;font-size:12px;font-weight:bold;color:#000;letter-spacing:-0.22px;-webkit-text-stroke:0.2px currentColor;">ООО Спутниковые Телеком. Системы</div><div class="t" style="left:27px;top:230px;font-size:12px;font-weight:bold;color:#000;-webkit-text-stroke:0.2px currentColor;">Форте</div><div class="t" style="left:299px;top:117px;font-size:12px;font-weight:bold;color:#000;letter-spacing:-0.2px;-webkit-text-stroke:0.2px currentColor;">Номера карт</div><div class="t" style="left:726px;top:117px;font-size:12px;font-weight:bold;color:#000;-webkit-text-stroke:0.2px currentColor;">Фильтр</div><div class="t" style="left:725px;top:142px;font-size:12px;font-weight:bold;color:#000;-webkit-text-stroke:0.2px currentColor;">Статус:</div><div class="t" style="left:776px;top:142px;font-size:12px;font-weight:bold;color:#000;-webkit-text-stroke:0.2px currentColor;">все</div><div class="t" style="left:886px;top:142px;font-size:12px;font-weight:bold;color:#000;-webkit-text-stroke:0.2px currentColor;">все</div><div class="t" style="left:293px;top:184px;width:91px;text-align:center;font-size:12px;font-weight:bold;color:#000;-webkit-text-stroke:0.2px currentColor;">Загрузить</div><div class="t" style="left:390px;top:184px;width:119px;text-align:center;font-size:12px;font-weight:bold;color:#000;-webkit-text-stroke:0.2px currentColor;">Передать дил.</div><div class="t" style="left:515px;top:184px;width:120px;text-align:center;font-size:12px;font-weight:bold;color:#000;-webkit-text-stroke:0.2px currentColor;">Забрать у дил.</div><div class="t" style="left:733px;top:184px;width:54px;text-align:center;font-size:12px;font-weight:bold;color:#000;-webkit-text-stroke:0.2px currentColor;">&gt;&gt;&gt;</div><div class="t" style="left:793px;top:184px;width:41px;text-align:center;font-size:12px;font-weight:bold;color:#000;-webkit-text-stroke:0.2px currentColor;">X</div><div class="t" style="left:892px;top:184px;width:81px;text-align:center;font-size:12px;font-weight:normal;color:#000;">1 из 64</div><div class="t" style="left:294px;top:211px;width:149px;text-align:center;font-size:12px;font-weight:normal;color:#000;">Номер</div><div class="t" style="left:444px;top:211px;width:195px;text-align:center;font-size:12px;font-weight:normal;color:#000;">Договор</div><div class="t" style="left:640px;top:211px;width:165px;text-align:center;font-size:12px;font-weight:normal;color:#000;">С даты</div><div class="t" style="left:806px;top:211px;width:243px;text-align:center;font-size:12px;font-weight:normal;color:#000;">Дилер</div><div class="t" style="left:299px;top:565px;font-size:12px;font-weight:bold;color:#000;-webkit-text-stroke:0.2px currentColor;">Редактор</div><div class="t" style="left:882px;top:591px;width:49px;text-align:center;font-size:12px;font-weight:bold;color:#000;-webkit-text-stroke:0.2px currentColor;">OK</div><div class="t" style="left:942px;top:591px;width:76px;text-align:center;font-size:12px;font-weight:bold;color:#000;-webkit-text-stroke:0.2px currentColor;">Отмена</div><div class="t" style="left:298px;top:617px;font-size:12px;font-weight:bold;color:#000;letter-spacing:-0.2px;-webkit-text-stroke:0.2px currentColor;">Пример: n1; n2; n3-n4; n5+k</div><div class="t" style="left:29px;top:658px;font-size:12px;font-weight:bold;color:#000;-webkit-text-stroke:0.2px currentColor;">Модуль CerberCrypt</div>
<div style="position:absolute;left:294px;top:224px;width:714px;height:315px;overflow:hidden"><div style="position:absolute;left:-294px;top:-224px;width:1046px;height:680px"><div class="t" style="left:295px;top:226px;font-size:12px;">1</div><div class="t" style="left:445px;top:226px;font-size:12px;">ЦТВ_ТЕСТ1</div><div class="t" style="left:641px;top:226px;font-size:12px;letter-spacing:0.2px;">17.01.2006</div><div class="t" style="left:807px;top:226px;font-size:12px;">UFANET</div><div class="t" style="left:295px;top:242px;font-size:12px;">2</div><div class="t" style="left:445px;top:242px;font-size:12px;">ЦТВ_ТЕСТ2</div><div class="t" style="left:641px;top:242px;font-size:12px;letter-spacing:0.2px;">20.01.2006</div><div class="t" style="left:807px;top:242px;font-size:12px;">UFANET</div><div class="t" style="left:295px;top:258px;font-size:12px;">3</div><div class="t" style="left:445px;top:258px;font-size:12px;">ЦТВ_ТЕСТ3</div><div class="t" style="left:641px;top:258px;font-size:12px;letter-spacing:0.2px;">20.01.2006</div><div class="t" style="left:807px;top:258px;font-size:12px;">UFANET</div><div class="t" style="left:295px;top:274px;font-size:12px;">4</div><div class="t" style="left:445px;top:274px;font-size:12px;">ЦТВ_ТЕСТ4</div><div class="t" style="left:641px;top:274px;font-size:12px;letter-spacing:0.2px;">20.01.2006</div><div class="t" style="left:807px;top:274px;font-size:12px;">UFANET</div><div class="t" style="left:295px;top:290px;font-size:12px;">5</div><div class="t" style="left:445px;top:290px;font-size:12px;">ЦТВ_ТЕСТ5</div><div class="t" style="left:641px;top:290px;font-size:12px;letter-spacing:0.2px;">20.01.2006</div><div class="t" style="left:807px;top:290px;font-size:12px;">UFANET</div><div class="t" style="left:295px;top:306px;font-size:12px;">6</div><div class="t" style="left:445px;top:306px;font-size:12px;">ЦТВ_ТЕСТ6</div><div class="t" style="left:641px;top:306px;font-size:12px;letter-spacing:0.2px;">20.01.2006</div><div class="t" style="left:807px;top:306px;font-size:12px;">UFANET</div><div class="t" style="left:295px;top:322px;font-size:12px;">7</div><div class="t" style="left:445px;top:322px;font-size:12px;">ЦТВ_ТЕСТ7</div><div class="t" style="left:641px;top:322px;font-size:12px;letter-spacing:0.2px;">03.02.2006</div><div class="t" style="left:807px;top:322px;font-size:12px;">UFANET</div><div class="t" style="left:295px;top:338px;font-size:12px;">8</div><div class="t" style="left:445px;top:338px;font-size:12px;">ЦТВ_ТЕСТ8</div><div class="t" style="left:641px;top:338px;font-size:12px;letter-spacing:0.2px;">20.01.2006</div><div class="t" style="left:807px;top:338px;font-size:12px;">UFANET</div><div class="t" style="left:295px;top:354px;font-size:12px;">9</div><div class="t" style="left:445px;top:354px;font-size:12px;">ЦТВ_ТЕСТ9</div><div class="t" style="left:641px;top:354px;font-size:12px;letter-spacing:0.2px;">20.01.2006</div><div class="t" style="left:807px;top:354px;font-size:12px;">UFANET</div><div class="t" style="left:295px;top:370px;font-size:12px;">10</div><div class="t" style="left:445px;top:370px;font-size:12px;">!!!!!!!!!! не трогать!!!!ЦТВ_ТЕСТ10</div><div class="t" style="left:641px;top:370px;font-size:12px;letter-spacing:0.2px;">20.01.2006</div><div class="t" style="left:807px;top:370px;font-size:12px;">UFANET</div><div class="t" style="left:295px;top:386px;font-size:12px;">100</div><div class="t" style="left:445px;top:386px;font-size:12px;">КФ43255-05</div><div class="t" style="left:641px;top:386px;font-size:12px;letter-spacing:0.2px;">01.04.2006</div><div class="t" style="left:807px;top:386px;font-size:12px;">UFANET</div><div class="t" style="left:295px;top:402px;font-size:12px;">101</div><div class="t" style="left:445px;top:402px;font-size:12px;">КФ49769-05</div><div class="t" style="left:641px;top:402px;font-size:12px;letter-spacing:0.2px;">01.04.2006</div><div class="t" style="left:807px;top:402px;font-size:12px;">UFANET</div><div class="t" style="left:295px;top:418px;font-size:12px;">102</div><div class="t" style="left:445px;top:418px;font-size:12px;">КФ140995-06</div><div class="t" style="left:641px;top:418px;font-size:12px;letter-spacing:0.2px;">03.04.2006</div><div class="t" style="left:807px;top:418px;font-size:12px;">UFANET</div><div class="t" style="left:295px;top:434px;font-size:12px;">103</div><div class="t" style="left:445px;top:434px;font-size:12px;">КФ6962-04</div><div class="t" style="left:641px;top:434px;font-size:12px;letter-spacing:0.2px;">03.04.2006</div><div class="t" style="left:807px;top:434px;font-size:12px;">UFANET</div><div class="t" style="left:295px;top:450px;font-size:12px;">104</div><div class="t" style="left:445px;top:450px;font-size:12px;">ЦФ1027-06</div><div class="t" style="left:641px;top:450px;font-size:12px;letter-spacing:0.2px;">03.04.2006</div><div class="t" style="left:807px;top:450px;font-size:12px;">UFANET</div><div class="t" style="left:295px;top:466px;font-size:12px;">105</div><div class="t" style="left:445px;top:466px;font-size:12px;">КФ3042-04</div><div class="t" style="left:641px;top:466px;font-size:12px;letter-spacing:0.2px;">03.04.2006</div><div class="t" style="left:807px;top:466px;font-size:12px;">UFANET</div><div class="t" style="left:295px;top:482px;font-size:12px;">106</div><div class="t" style="left:445px;top:482px;font-size:12px;">КФ23164-05</div><div class="t" style="left:641px;top:482px;font-size:12px;letter-spacing:0.2px;">03.04.2006</div><div class="t" style="left:807px;top:482px;font-size:12px;">UFANET</div><div class="t" style="left:295px;top:498px;font-size:12px;">107</div><div class="t" style="left:445px;top:498px;font-size:12px;">КФ143595-06</div><div class="t" style="left:641px;top:498px;font-size:12px;letter-spacing:0.2px;">03.04.2006</div><div class="t" style="left:807px;top:498px;font-size:12px;">UFANET</div><div class="t" style="left:295px;top:514px;font-size:12px;">108</div><div class="t" style="left:445px;top:514px;font-size:12px;">КФ41658-05</div><div class="t" style="left:641px;top:514px;font-size:12px;letter-spacing:0.2px;">03.04.2006</div><div class="t" style="left:807px;top:514px;font-size:12px;">UFANET</div><div class="t" style="left:295px;top:530px;font-size:12px;">109</div><div class="t" style="left:445px;top:530px;font-size:12px;">КФ12521-05</div><div class="t" style="left:641px;top:530px;font-size:12px;letter-spacing:0.2px;">03.04.2006</div><div class="t" style="left:807px;top:530px;font-size:12px;">UFANET</div></div></div>
</div>
</body></html>
